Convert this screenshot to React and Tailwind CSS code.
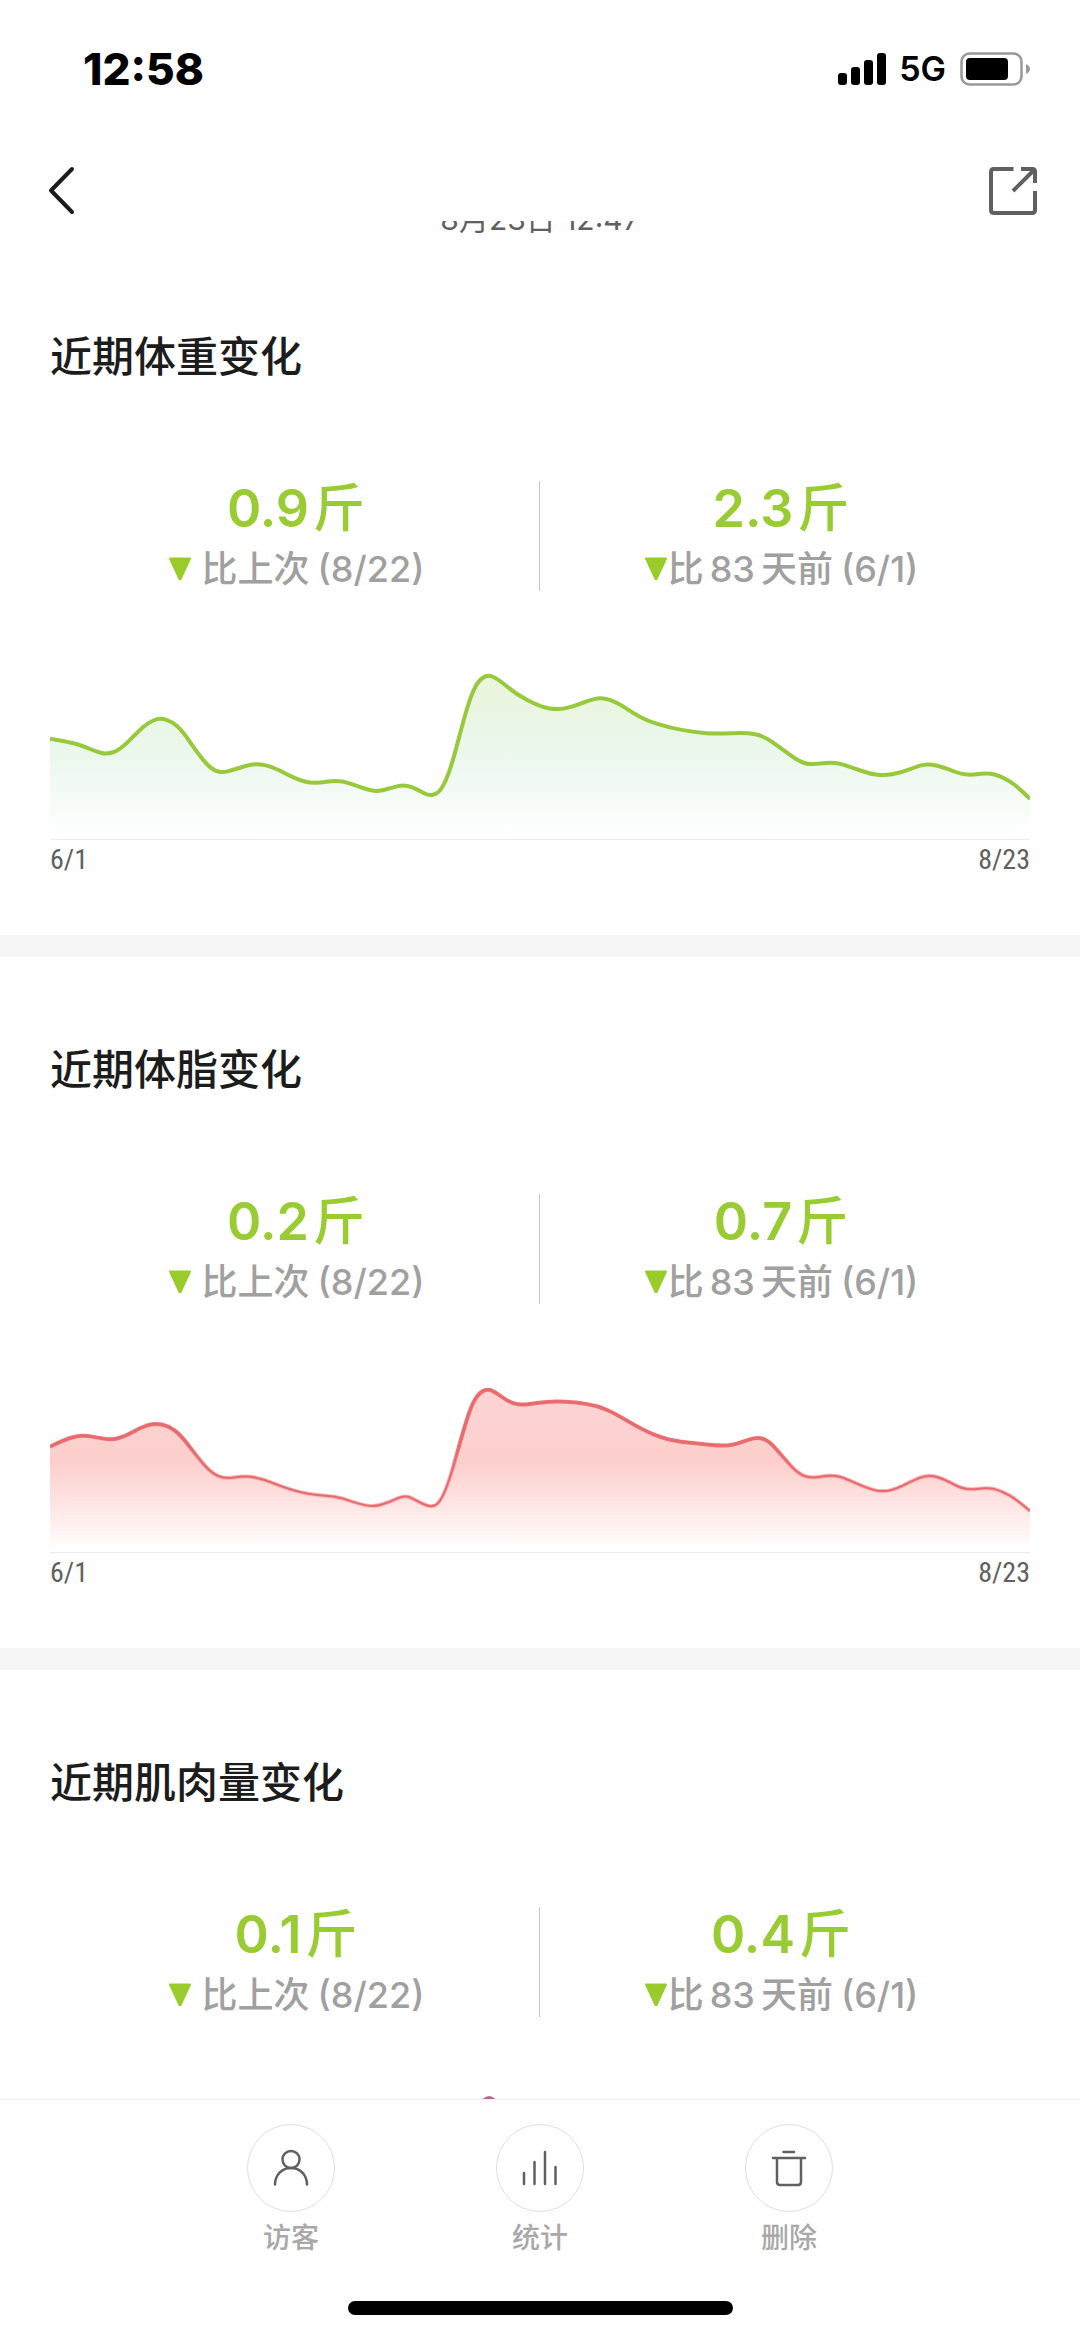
import { useId } from 'react';

const WEIGHT_POINTS = [
  [0, 78.7], [22, 82.5], [34, 86.5], [46, 91.5], [57, 94.5], [70.5, 89.5], [88, 71.7], [98, 62.8],
  [109.5, 57.7], [122, 61.7], [132.5, 71], [148, 93.7], [160, 108], [171, 113.3], [186, 109],
  [205, 103], [224, 107.3], [246, 119], [263.4, 124], [289, 119.6], [310, 127], [326, 132],
  [341, 128], [354.7, 124.3], [368.4, 130], [380, 136.3], [391, 131.5], [401, 108], [411.5, 68],
  [420, 38], [428, 21], [437.7, 14.5], [448, 19], [466.6, 34.5], [489.7, 46.5], [507.2, 50],
  [524.4, 46.3], [538, 40.5], [552, 37.3], [567.5, 42.5], [593.3, 59.7], [621, 68], [645, 72.3],
  [667.4, 74], [696.6, 72.5], [713.9, 76], [731, 88.3], [748.3, 101], [760.3, 105], [784.4, 101.6],
  [803.4, 108], [820.6, 114], [834.4, 115.6], [850, 113], [868.8, 105.7], [879.2, 104],
  [893, 107], [915.3, 116], [937.7, 112.7], [951.5, 116.3], [967, 126], [980, 138.7],
];

const FAT_POINTS = [
  [0, 73.7], [15.4, 66], [32.7, 62], [48, 64.7], [62, 67], [75.7, 63], [91, 54.3], [105, 50],
  [118.7, 53], [131, 62.3], [149.7, 87], [162, 100.5], [175.6, 106], [196, 102.6],
  [213.5, 106.3], [230.7, 113.3], [249.6, 119.3], [266.8, 122], [289, 124], [304.7, 129.7],
  [322.6, 134], [339, 129.5], [355, 121.8], [367, 128], [380.5, 134.5], [390, 130],
  [400, 106], [411.5, 64], [421, 33], [429, 20], [437.7, 15.8], [446, 19.5], [458, 28.5],
  [470, 32.3], [489.7, 29.7], [503.8, 28.3], [526, 29.3], [548.5, 33], [565.8, 41],
  [593.3, 57.3], [617.4, 67], [645, 70.3], [672.5, 73], [686.3, 71.3], [698.4, 66.5],
  [708.7, 64.3], [719, 68], [732.8, 83.7], [746.6, 99.5], [760.3, 105.7], [784.4, 101.3],
  [801.7, 108.3], [818.9, 116], [832.7, 118.8], [846.4, 116], [867, 105.5], [880.2, 102],
  [894.7, 106.5], [915.3, 117.5], [937.7, 114.3], [951.5, 118], [967, 126.7], [980, 138],
];

const MUSCLE_POINTS = [
  [0, 80], [30, 85], [57, 94], [84, 75], [109, 58], [135, 74], [160, 108], [205, 104], [263, 123],
  [326, 131], [380, 134], [401, 106], [411, 66], [421, 36], [430, 18], [439, 10], [448, 18],
  [466, 34], [507, 49], [552, 38], [621, 68], [697, 73], [760, 104], [834, 115], [879, 105],
  [938, 113], [980, 138],
];

const SECTIONS = [
  {
    title: '近期体重变化',
    last: '0.9',
    total: '2.3',
    points: WEIGHT_POINTS,
    line: ['#98c93c', '#98c93c'],
    core: '#98c93c',
    area: ['#ebf5da', '#eaf7ec', '#ffffff'],
  },
  {
    title: '近期体脂变化',
    last: '0.2',
    total: '0.7',
    points: FAT_POINTS,
    line: ['#f07272', '#fab4b4'],
    core: '#e56b70',
    area: ['#fdd3d5', '#fccfcc', '#ffffff'],
  },
  {
    title: '近期肌肉量变化',
    last: '0.1',
    total: '0.4',
    points: MUSCLE_POINTS,
    line: ['#b5688c', '#b5688c'],
    core: '#b5688c',
    area: ['#f3dbe6', '#f6e4ec', '#ffffff'],
  },
];

// Quadratic curve through the midpoints, each data point is a control point
const smoothPath = (points) => {
  const [first, ...rest] = points;
  const end = rest.pop();
  const curves = rest.map((p, i) => {
    const next = rest[i + 1];
    if (!next) return `Q${p[0]} ${p[1]} ${end[0]} ${end[1]}`;
    return `Q${p[0]} ${p[1]} ${(p[0] + next[0]) / 2} ${(p[1] + next[1]) / 2}`;
  });
  return `M${first[0]} ${first[1]}${curves.join('')}`;
};

const TrendChart = ({ points, line, core, area }) => {
  const id = useId();
  const path = smoothPath(points);

  return (
    <svg viewBox="0 0 980 179" className="block w-full h-auto" aria-hidden="true">
      <defs>
        <linearGradient id={`${id}-area`} gradientUnits="userSpaceOnUse" x1="0" y1="18" x2="0" y2="178">
          <stop offset="0" stopColor={area[0]} />
          <stop offset="0.45" stopColor={area[1]} />
          <stop offset="1" stopColor={area[2]} />
        </linearGradient>
        <linearGradient id={`${id}-line`} gradientUnits="userSpaceOnUse" x1="0" y1="70" x2="0" y2="110">
          <stop offset="0" stopColor={line[0]} />
          <stop offset="1" stopColor={line[1]} />
        </linearGradient>
      </defs>
      <path d={`${path}V179H0Z`} fill={`url(#${id}-area)`} />
      <path d={path} fill="none" stroke={`url(#${id}-line)`} strokeWidth="4" />
      <path d={path} fill="none" stroke={core} strokeWidth="2" />
    </svg>
  );
};

const DownTriangle = () => (
  <svg width="24" height="24" viewBox="0 0 24 24" className="shrink-0" aria-hidden="true">
    <path d="M2 1.500H22L12.500 22H11.500Z" fill="#99cc2a" stroke="#99cc2a" strokeWidth="2" strokeLinejoin="round" />
  </svg>
);

const Stat = ({ value, children }) => (
  <div className="flex flex-col items-center">
    <p className="flex items-center gap-1 text-[52px] leading-[56px] text-[#99cc33]">
      <span className="font-semibold">{value}</span>
      <span className="font-medium">斤</span>
    </p>
    <div className="mt-[10px] flex items-center text-[36px] leading-[44px] font-medium text-[#a0a0a0]">
      <DownTriangle />
      {children}
    </div>
  </div>
);

const TrendSection = ({ title, last, total, ...chart }) => (
  <section className="px-[50px] pt-[83px] pb-[59px]">
    <h2 className="text-[42px] leading-[60px] font-medium text-[#1c1c1c]">{title}</h2>

    <div className="mt-[94px] grid grid-cols-2">
      <div className="pl-0.5">
        <Stat value={last}>
          <span className="ml-[10px]">比上次</span>
          <span className="ml-2">(8/22)</span>
        </Stat>
      </div>
      <div className="-ml-px border-l border-[#c8c8c8] pr-2">
        <Stat value={total}>
          <span>比</span>
          <span className="mx-[6px]">83</span>
          <span>天前</span>
          <span className="ml-2">(6/1)</span>
        </Stat>
      </div>
    </div>

    <div className="mt-[69px] border-b border-[#f0ecee]">
      <TrendChart {...chart} />
    </div>
    <div className="mt-1 flex justify-between text-[28px] leading-[32px] text-[#606060] font-['Roboto_Condensed',Roboto,sans-serif]">
      <span>6/1</span>
      <span>8/23</span>
    </div>
  </section>
);

const StatusBar = () => (
  <div className="flex h-[137px] items-center justify-between pl-[83px] pr-[50px] text-black">
    <span className="text-[44px] leading-[48px] font-extrabold">12:58</span>
    <div className="flex items-center">
      <svg width="48" height="32" viewBox="0 0 48 32" aria-hidden="true">
        <rect x="0" y="20" width="9" height="12" rx="3" />
        <rect x="13" y="14" width="9" height="18" rx="3" />
        <rect x="26" y="7" width="9" height="25" rx="3" />
        <rect x="39" y="0" width="9" height="32" rx="3" />
      </svg>
      <span className="ml-[13px] text-[34px] leading-[40px] font-semibold">5G</span>
      <svg width="70" height="34" viewBox="0 0 70 34" className="ml-[14px]" aria-hidden="true">
        <rect x="1.500" y="1.500" width="60" height="31" rx="8" fill="none" stroke="#999" strokeWidth="2.500" />
        <rect x="6" y="6" width="42" height="22" rx="4" />
        <path d="M66 12Q70 14 70 17Q70 20 66 22Z" fill="#999" />
      </svg>
    </div>
  </div>
);

const BackIcon = () => (
  <svg width="27" height="49" viewBox="0 0 27 49" fill="none" stroke="#1c1c1c" strokeWidth="4" aria-hidden="true">
    <path d="M24 3L3 24.500L24 46" strokeLinecap="round" strokeLinejoin="round" />
  </svg>
);

const ShareIcon = () => (
  <svg width="48" height="48" viewBox="0 0 48 48" fill="none" stroke="#606060" strokeWidth="4" aria-hidden="true">
    <path d="M24.500 2H5Q2 2 2 5V43Q2 46 5 46H43Q46 46 46 43V24" />
    <path d="M32 2H43.500Q46 2 46 4.500V16" />
    <path d="M45 3L24 24" />
  </svg>
);

const ACTIONS = [
  {
    label: '访客',
    icon: (
      <>
        <circle cx="18" cy="9.500" r="8.500" />
        <path d="M2 34.500C2 25 9 18 18 18S34 25 34 34.500" />
      </>
    ),
  },
  { label: '统计', icon: <path d="M2 23V34M12.500 12V34M23 2V34M33.500 17V34" /> },
  {
    label: '删除',
    icon: <path d="M12.500 2H23M2 8H34M6 8V32Q6 35 9 35H27Q30 35 30 32V8" />,
  },
];

const ActionButton = ({ label, icon }) => (
  <button type="button" className="flex w-22 flex-col items-center">
    <span className="flex h-22 w-22 items-center justify-center rounded-full border border-[#dedede]">
      <svg width="36" height="36" viewBox="0 0 36 36" className="overflow-visible" fill="none" stroke="#606060" strokeWidth="2.500" strokeLinecap="round" aria-hidden="true">
        {icon}
      </svg>
    </span>
    <span className="mt-2 text-[28px] leading-[36px] font-medium text-[#a8a8a8]">{label}</span>
  </button>
);

const App = () => (
  <div className="flex h-screen flex-col bg-white font-[Inter,'Noto_Sans_CJK_SC',sans-serif]">
    <header className="shrink-0">
      <StatusBar />
      <nav className="mt-[23px] flex h-[61px] items-center justify-between pl-12 pr-[43px]">
        <button type="button" aria-label="返回">
          <BackIcon />
        </button>
        <button type="button" aria-label="分享">
          <ShareIcon />
        </button>
      </nav>
    </header>

    <main className="min-h-0 flex-1 overflow-hidden">
      {/* The list is scrolled, so the timestamp sits half under the header */}
      <p className="-mt-[22px] pb-[5px] text-center text-[30px] leading-[40px] text-[#606060]">8月23日 12:47</p>
      <div className="divide-y-[22px] divide-[#f6f6f6]">
        {SECTIONS.map((section) => (
          <TrendSection key={section.title} {...section} />
        ))}
      </div>
    </main>

    <footer className="shrink-0 border-t border-[#efefef] bg-white pt-6 pb-[22px]">
      <div className="flex justify-center gap-[161px]">
        {ACTIONS.map((action) => (
          <ActionButton key={action.label} {...action} />
        ))}
      </div>
      <div className="mx-auto mt-[45px] h-[14px] w-[385px] rounded-full bg-black" />
    </footer>
  </div>
);

export default App;
